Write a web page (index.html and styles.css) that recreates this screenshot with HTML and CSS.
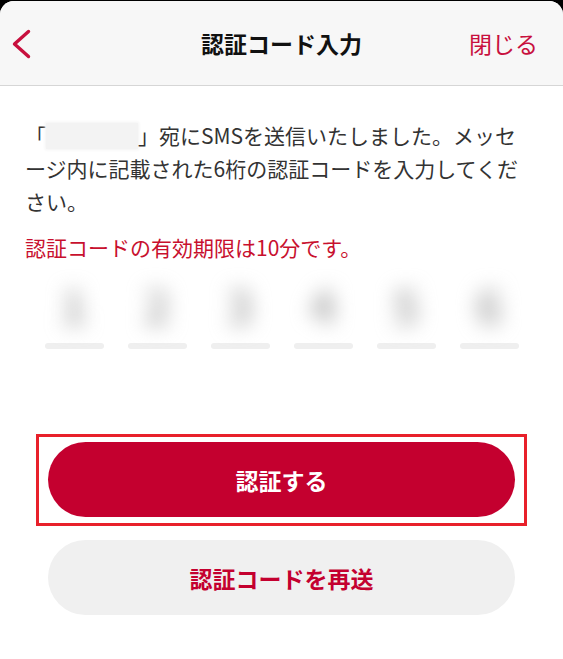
FILE: index.html
```html
<!DOCTYPE html>
<html lang="ja">
<head>
<meta charset="utf-8">
<title>認証コード入力</title>
<link rel="stylesheet" href="styles.css">
</head>
<body>
<div class="sheet">
  <header class="nav">
    <button class="back" aria-label="戻る">
      <svg width="22" height="30" viewBox="0 0 22 30"><path d="M18.5 2.5 L4.5 15 L18.5 27.5" fill="none" stroke="#c8103e" stroke-width="3.4" stroke-linecap="round" stroke-linejoin="round"/></svg>
    </button>
    <h1 class="title">認証コード入力</h1>
    <a class="close">閉じる</a>
  </header>
  <main class="content">
    <p class="lead">「<span class="masked" aria-label="電話番号"></span>」宛にSMSを送信いたしました。メッセージ内に記載された6桁の認証コードを入力してください。</p>
    <p class="notice">認証コードの有効期限は10分です。</p>
    <div class="code-row">
      <div class="cell"><span class="digit">1</span><span class="bar"></span></div>
      <div class="cell"><span class="digit">2</span><span class="bar"></span></div>
      <div class="cell"><span class="digit">3</span><span class="bar"></span></div>
      <div class="cell"><span class="digit">4</span><span class="bar"></span></div>
      <div class="cell"><span class="digit">5</span><span class="bar"></span></div>
      <div class="cell"><span class="digit">6</span><span class="bar"></span></div>
    </div>
    <div class="actions">
      <div class="highlight">
        <button class="btn btn-primary">認証する</button>
      </div>
      <button class="btn btn-secondary">認証コードを再送</button>
    </div>
  </main>
</div>
</body>
</html>
```
FILE: styles.css
```css
* { box-sizing: border-box; }
html, body { margin: 0; padding: 0; }
body {
  background: #000;
  font-family: "Noto Sans CJK JP", "Noto Sans", sans-serif;
  color: #222;
  width: 563px;
  height: 659px;
  overflow: hidden;
}
.sheet {
  margin-top: 1px;
  background: #fff;
  border-radius: 14px 14px 0 0;
  height: 658px;
  overflow: hidden;
}
.nav {
  height: 85px;
  background: #f7f7f7;
  border-bottom: 1px solid #d6d6d6;
  display: grid;
  grid-template-columns: 1fr auto 1fr;
  align-items: center;
  padding: 0 25px;
}
.back {
  justify-self: start;
  background: none;
  border: 0;
  padding: 0;
  display: flex;
  margin-left: -15px;
  margin-top: 2px;
}
.title {
  margin: 0;
  font-size: 23px;
  font-weight: 700;
  color: #111;
  letter-spacing: 0;
}
.close {
  justify-self: end;
  font-size: 23px;
  color: #c8103e;
}
.content {
  padding: 33px 30px 0 25px;
}
.lead {
  margin: 0;
  font-size: 21px;
  line-height: 33px;
  color: #333;
}
.masked {
  display: inline-block;
  width: 92px;
  height: 26px;
  vertical-align: -5px;
  background: #f3f3f3;
  box-shadow: 0 0 3px 1px #f3f3f3;
}
.notice {
  margin: 13px 0 0;
  font-size: 21px;
  line-height: 33px;
  color: #c8102e;
}
.code-row {
  display: flex;
  justify-content: center;
  gap: 24px;
  margin: 10px 0 0 5px;
}
.cell {
  width: 59px;
  display: flex;
  flex-direction: column;
  align-items: center;
}
.digit {
  height: 62px;
  font-size: 44px;
  font-weight: 700;
  line-height: 62px;
  color: #a8a8a8;
  filter: blur(10px);
}
.bar {
  width: 59px;
  height: 6px;
  margin-top: 7px;
  border-radius: 3px;
  background: #efefef;
}
.actions {
  margin-top: 85px;
  padding: 0 6px 0 11px;
  display: flex;
  flex-direction: column;
  gap: 14px;
}
.highlight {
  border: 3px solid #e8202a;
  padding: 5px 9px 6px;
}
.btn {
  display: block;
  width: 100%;
  height: 75px;
  border: 0;
  border-radius: 38px;
  font-family: inherit;
  font-size: 23px;
  font-weight: 700;
}
.btn-primary {
  background: #c4002f;
  color: #fff;
}
.btn-secondary {
  background: #f0f0f0;
  color: #c4002f;
  width: 467px;
  margin-left: 12px;
}
```
